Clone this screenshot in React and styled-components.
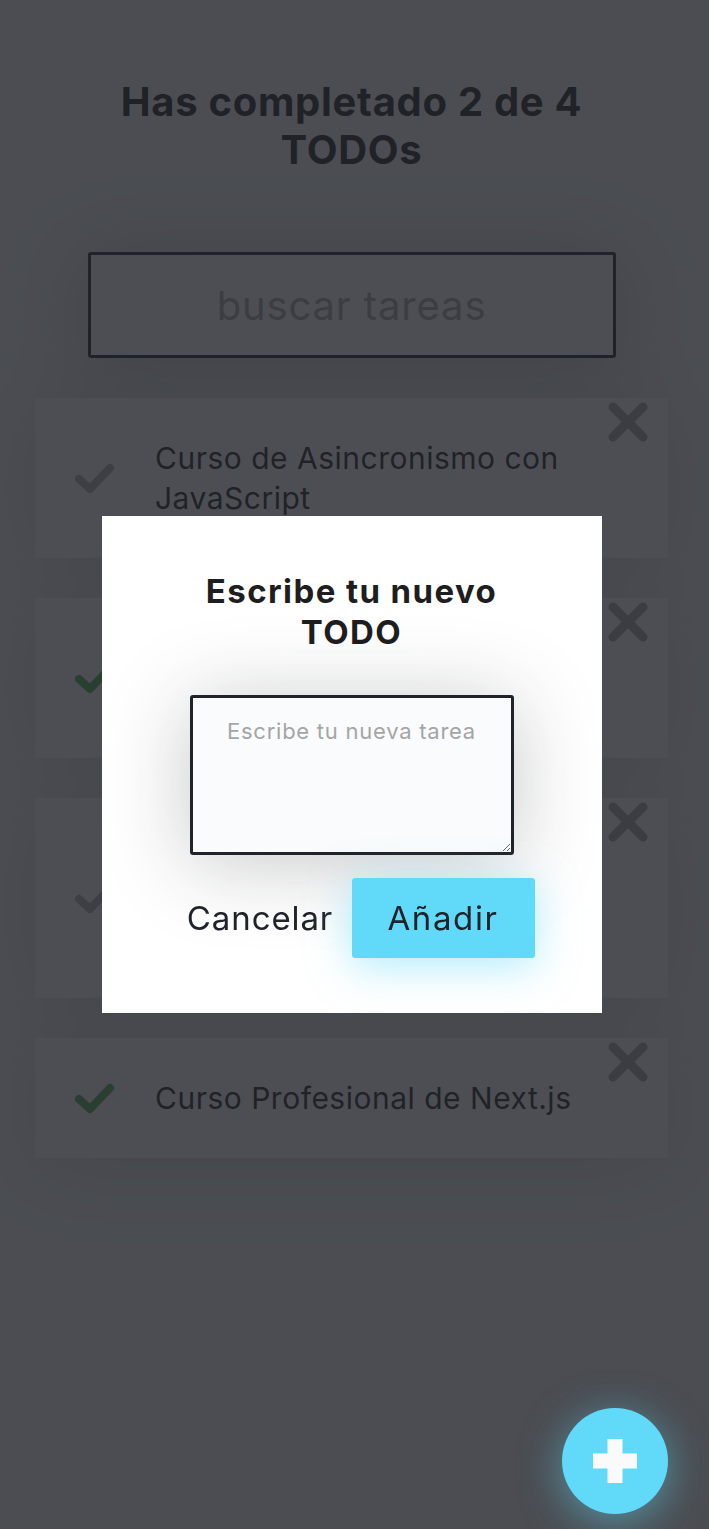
import React from "react";
import styled, { createGlobalStyle } from "styled-components";

const GlobalStyle = createGlobalStyle`
  body {
    margin: 0;
    background: #F2F4F5;
    font-family: Inter, "Liberation Sans", sans-serif;
    color: #1E1E1F;
  }
`;

const Page = styled.div`
  width: 703px;
`;

const Counter = styled.h1`
  margin: 0;
  padding: 78px 70px 78px;
  font-size: 40px;
  line-height: 48px;
  font-weight: 700;
  letter-spacing: 0.7px;
  text-align: center;
  color: #1E1E1F;
`;

const Search = styled.input`
  display: block;
  box-sizing: border-box;
  margin: 0 auto;
  width: 528px;
  height: 106px;
  background: #F9FBFC;
  border: 3px solid #202329;
  border-radius: 3px;
  font-family: inherit;
  font-size: 40px;
  letter-spacing: 0.85px;
  text-align: center;
  color: #1E1E1F;
  box-shadow: 0px 8px 83px rgba(32, 35, 41, 0.25);

  &::placeholder {
    color: #A5A5A5;
  }
`;

const List = styled.ul`
  margin: 0;
  padding: 0 0 93px;
  list-style: none;
`;

const Item = styled.li`
  position: relative;
  display: flex;
  justify-content: center;
  align-items: center;
  margin: 40px 35px 0;
  background: #FAFAFA;
  box-shadow: 0px 8px 83px rgba(32, 35, 41, 0.15);
`;

const ItemText = styled.p`
  margin: 40px 0 40px 40px;
  width: calc(100% - 200px);
  font-size: 30px;
  line-height: 40px;
  font-weight: 400;
  letter-spacing: 0.5px;
`;

const CheckBox = styled.span`
  position: absolute;
  left: 20px;
  top: 50%;
  transform: translateY(-50%);
  width: 80px;
  height: 80px;
  display: flex;
  align-items: center;
  justify-content: center;
  color: ${(p) => (p.$done ? "#4CAF50" : "#B0B0B0")};
`;

const DeleteBox = styled.span`
  position: absolute;
  top: 4px;
  right: 20px;
  width: 40px;
  height: 40px;
  color: #A5A5A5;
`;

const Overlay = styled.div`
  position: fixed;
  inset: 0;
  box-sizing: border-box;
  padding-right: 6px;
  background: rgba(32, 35, 41, 0.8);
  display: flex;
  justify-content: center;
  align-items: center;
  z-index: 1;
`;

const Form = styled.form`
  box-sizing: border-box;
  width: 500px;
  padding: 55px 67px;
  background: #fff;
  display: flex;
  flex-direction: column;
  align-items: center;
`;

const Label = styled.label`
  max-width: 330px;
  margin-bottom: 43px;
  text-align: center;
  font-size: 33px;
  line-height: 40.5px;
  font-weight: 700;
  letter-spacing: 1.4px;
  color: #1E1E1F;
`;

const TextArea = styled.textarea`
  box-sizing: border-box;
  width: 324px;
  height: 160px;
  padding: 20px;
  background: #F9FBFC;
  border: 3px solid #202329;
  border-radius: 3px;
  box-shadow: 0px 8px 83px rgba(32, 35, 41, 0.25);
  font-family: inherit;
  font-size: 22px;
  letter-spacing: 0.75px;
  text-align: center;
  color: #1E1E1F;

  &::placeholder {
    color: #A5A5A5;
  }
`;

const ButtonRow = styled.div`
  margin-top: 23px;
  width: 100%;
  display: flex;
  justify-content: space-between;
  align-items: center;
`;

const Button = styled.button`
  width: 183px;
  height: 80px;
  padding: 0;
  border: none;
  border-radius: 3px;
  font-family: inherit;
  font-size: 33px;
  font-weight: 400;
  letter-spacing: ${(p) => (p.$add ? "1.6px" : "0.9px")};
  color: #202329;
  cursor: pointer;
  background: ${(p) => (p.$add ? "#61DAFA" : "transparent")};
  box-shadow: ${(p) => (p.$add ? "0px 8px 42px rgba(97, 218, 250, 0.5)" : "none")};
`;

const Fab = styled.button`
  position: fixed;
  right: 41px;
  bottom: 15px;
  width: 106px;
  height: 106px;
  border: none;
  border-radius: 50%;
  background: #61DAFA;
  box-shadow: 0px 8px 42px rgba(97, 218, 250, 0.5);
  display: flex;
  align-items: center;
  justify-content: center;
  z-index: 2;
  cursor: pointer;
`;

const todos = [
  { text: "Curso de Asincronismo con JavaScript", done: false },
  { text: "Curso de Introducción a React.js", done: true },
  { text: "Curso Práctico de React.js: creación de tu primera aplicación web", done: false },
  { text: "Curso Profesional de Next.js", done: true },
];

function CheckIcon() {
  return (
    <svg width="40" height="40" viewBox="0 0 40 40">
      <polyline
        points="4,21 15,31 35,10"
        fill="none"
        stroke="currentColor"
        strokeWidth="8"
        strokeLinecap="round"
        strokeLinejoin="round"
      />
    </svg>
  );
}

function DeleteIcon() {
  return (
    <svg width="40" height="40" viewBox="0 0 40 40">
      <g stroke="currentColor" strokeWidth="9" strokeLinecap="round">
        <line x1="5" y1="5" x2="35" y2="35" />
        <line x1="35" y1="5" x2="5" y2="35" />
      </g>
    </svg>
  );
}

function App() {
  return (
    <>
      <GlobalStyle />
      <Page>
        <Counter>Has completado 2 de 4 TODOs</Counter>
        <Search placeholder="buscar tareas" />
        <List>
          {todos.map((t) => (
            <Item key={t.text}>
              <CheckBox $done={t.done}>
                <CheckIcon />
              </CheckBox>
              <ItemText>{t.text}</ItemText>
              <DeleteBox>
                <DeleteIcon />
              </DeleteBox>
            </Item>
          ))}
        </List>
      </Page>
      <Fab aria-label="Crear TODO">
        <svg width="44" height="44" viewBox="0 0 44 44">
          <rect x="14.5" y="0" width="15" height="44" fill="#FAFAFA" />
          <rect x="0" y="14.5" width="44" height="15" fill="#FAFAFA" />
        </svg>
      </Fab>
      <Overlay>
        <Form onSubmit={(e) => e.preventDefault()}>
          <Label>Escribe tu nuevo TODO</Label>
          <TextArea placeholder="Escribe tu nueva tarea" />
          <ButtonRow>
            <Button type="button">Cancelar</Button>
            <Button type="submit" $add>
              Añadir
            </Button>
          </ButtonRow>
        </Form>
      </Overlay>
    </>
  );
}

export default App;
